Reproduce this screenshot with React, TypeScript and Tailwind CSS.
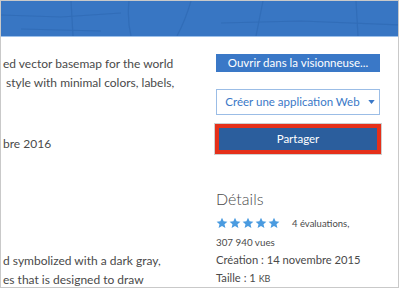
const font = { fontFamily: 'Lato, "Noto Sans", sans-serif' };

function Star() {
    return (
        <svg viewBox="0 0 24 24" className="w-[12px] h-[12px]" fill="#4a9be0">
            <path d="M12 1.5l3.2 7.1 7.6.7-5.8 5.1 1.8 7.6L12 18l-6.8 4 1.8-7.6-5.8-5.1 7.6-.7z" />
        </svg>
    );
}

export default function App() {
    return (
        <div className="w-[400px] h-[289px] bg-white overflow-hidden" style={font}>
            <div className="w-[399px] h-[288px] border border-[#c9c9c9] flex flex-col">
                {/* banner with faint map texture */}
                <div className="h-[36px] bg-[#3876c3] border-b border-[#9cc0ea] relative overflow-hidden shrink-0">
                    <svg className="absolute inset-0" width="398" height="35" viewBox="0 0 398 35">
                        <g stroke="#2f6ab4" strokeWidth="1.2" fill="none" opacity="0.7">
                            <path d="M70 0 L72 35" />
                            <path d="M128 0 Q126 18 130 35" />
                            <path d="M190 0 Q184 20 176 35" />
                            <path d="M262 0 L255 35" />
                            <path d="M355 0 L357 35" />
                            <path d="M0 14 L60 16 L120 12" />
                            <path d="M220 22 L300 20 L398 24" />
                            <path d="M20 28 L100 30" />
                        </g>
                    </svg>
                </div>

                <div className="flex flex-1">
                    {/* description column (cut off on the left) */}
                    <div className="w-[214px] pl-[2px] text-[12px] text-[#4a4a4a] leading-[19px] shrink-0">
                        <p className="mt-[17px] whitespace-nowrap">ed vector basemap for the world</p>
                        <p className="whitespace-nowrap"> &nbsp;style with minimal colors, labels,</p>
                        <p className="mt-[42px] whitespace-nowrap">bre 2016</p>
                        <p className="mt-[98px] whitespace-nowrap">d symbolized with a dark gray,</p>
                        <p className="whitespace-nowrap">es that is designed to draw</p>
                    </div>

                    {/* actions and details */}
                    <div className="w-[164px] ml-[1px] flex flex-col">
                        <button className="mt-[17px] h-[18px] bg-[#3a78c7] text-white text-[11.5px] flex items-center justify-center">
                            Ouvrir dans la visionneuse...
                        </button>
                        <button className="mt-[17px] h-[26px] bg-white border border-[#9bbde6] text-[#3a78c7] text-[11.5px] flex items-center justify-center gap-[8px] pl-[4px]">
                            Créer une application Web
                            <svg viewBox="0 0 8 5" className="w-[7px] h-[4px]" fill="#3a78c7">
                                <path d="M0 0h8L4 5z" />
                            </svg>
                        </button>
                        <div className="mt-[9px] -mx-[1px] border-4 border-[#e5301a] shadow-[0_0_0_1px_#cfcfcf]">
                            <button className="w-full h-[22px] bg-[#2b5e9d] text-white text-[11.5px] flex items-center justify-center">
                                Partager
                            </button>
                        </div>

                        <h3 className="mt-[35px] text-[16px] leading-[20px] text-[#4a4a4a] font-light">Détails</h3>
                        <div className="mt-[5px] flex items-center">
                            <div className="flex gap-[1px]">
                                <Star /><Star /><Star /><Star /><Star />
                            </div>
                            <span className="ml-[12px] mt-[3px] text-[9.5px] text-[#4a4a4a]">4 évaluations,</span>
                        </div>
                        <p className="mt-[4px] text-[9.8px] leading-[14px] text-[#4a4a4a]">307 940 vues</p>
                        <p className="mt-[1px] text-[11.2px] leading-[19px] text-[#4a4a4a]">Création : 14 novembre 2015</p>
                        <p className="text-[11.2px] leading-[17px] text-[#4a4a4a]">
                            Taille : 1 <span className="text-[9px]">KB</span>
                        </p>
                    </div>
                </div>
            </div>
        </div>
    );
}
